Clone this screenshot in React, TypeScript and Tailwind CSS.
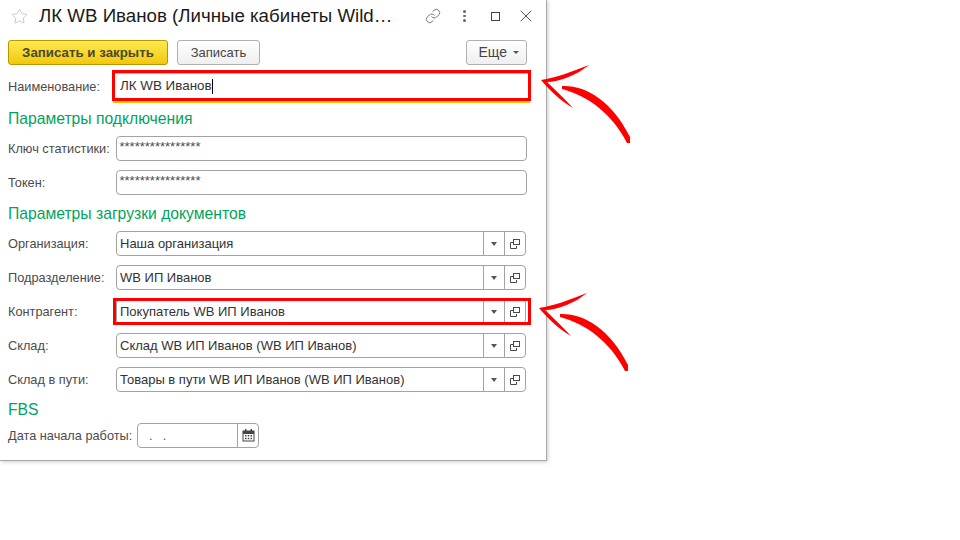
import { ReactNode } from 'react';
import { Link, Star, X } from 'lucide-react';

const Label = ({ children, w = 'w-[108px]' }: { children: ReactNode; w?: string }) => (
  <span className={`${w} shrink-0 text-[12.75px] whitespace-nowrap text-[#4b4b4b]`}>{children}</span>
);

const Heading = ({ children, className }: { children: ReactNode; className: string }) => (
  <h2 className={`pl-2 text-[15.7px] leading-[18px] text-[#00a35c] ${className}`}>{children}</h2>
);

function CopyIcon() {
  return (
    <svg width="10" height="10" viewBox="0 0 10 10" fill="none" stroke="#4a4a4a" strokeWidth="1">
      <rect x="3.5" y="0.5" width="6" height="5" />
      <path d="M3 3.5H0.5V9.5H6.5V7" />
    </svg>
  );
}

function CalendarIcon() {
  return (
    <svg width="13" height="13" viewBox="0 0 13 13" fill="#444">
      <rect x="3" y="0" width="1.5" height="3" />
      <rect x="8.5" y="0" width="1.5" height="3" />
      <path d="M0.5 1.5H12.5V12.5H0.5ZM1.5 5V11.5H11.5V5Z" fillRule="evenodd" />
      <rect x="3" y="6" width="1.5" height="1.5" />
      <rect x="5.75" y="6" width="1.5" height="1.5" />
      <rect x="8.5" y="6" width="1.5" height="1.5" />
      <rect x="3" y="8.75" width="1.5" height="1.5" />
      <rect x="5.75" y="8.75" width="1.5" height="1.5" />
      <rect x="8.5" y="8.75" width="1.5" height="1.5" />
    </svg>
  );
}

function TextRow({ label }: { label: string }) {
  return (
    <div className="flex h-[25px] items-center pl-2">
      <Label>{label}</Label>
      <div className="h-full w-[411px] rounded-[4px] border border-[#a3a3a3] pl-[2.5px] text-[13px] leading-[20px] text-[#4b4b4b]">
        ****************
      </div>
    </div>
  );
}

function SelectRow({ label, value }: { label: string; value: string }) {
  return (
    <div className="flex h-[25px] items-center pl-2">
      <Label>{label}</Label>
      <div className="flex h-full w-[410px] items-center rounded-[4px] border border-[#a3a3a3] text-[13px] text-[#333]">
        <span className="flex-1 pl-[3px]">{value}</span>
        <span className="flex h-full w-[21px] items-center justify-center border-l border-[#a3a3a3]">
          <span className="h-0 w-0 border-x-[3px] border-t-[4px] border-x-transparent border-t-[#555]" />
        </span>
        <span className="flex h-full w-[21px] items-center justify-center border-l border-[#a3a3a3]">
          <CopyIcon />
        </span>
      </div>
    </div>
  );
}

function ArrowMark({ className }: { className: string }) {
  return (
    <svg className={className} width="92" height="80" viewBox="0 0 92 80" fill="#ff0000">
      <path d="M0 15C14 13 30 7 48 0C36 10 18 17 6 17C15 26 24 34 32 43C20 36 9 26 0 15Z" />
      <path d="M21 21C45 20 71 36 89 72L89 78L86 78C72 50 48 31 21 24Z" />
    </svg>
  );
}

export default function App() {
  return (
    <div className="relative h-[540px] w-[960px] overflow-hidden bg-white font-['Liberation_Sans',sans-serif]">
      <div className="h-[461px] w-[547px] border-r border-b border-[#a8a8a8] shadow-[1px_1px_4px_rgba(0,0,0,0.2)]">
        {/* Title bar */}
        <div className="flex h-[31px] items-center pt-[1px]">
          <Star size={17} strokeWidth={1} className="ml-[11px] text-[#b5b5b5]" />
          <h1 className="ml-[11px] w-[355px] text-[18.7px] whitespace-nowrap text-[#1a1a1a]">
            ЛК WB Иванов (Личные кабинеты Wild…
          </h1>
          <Link size={16} strokeWidth={1.3} className="ml-[31px] text-[#666]" />
          <span className="ml-[22px] flex flex-col gap-[2px]">
            <i className="h-[2.5px] w-[2.5px] rounded-full bg-[#666]" />
            <i className="h-[2.5px] w-[2.5px] rounded-full bg-[#666]" />
            <i className="h-[2.5px] w-[2.5px] rounded-full bg-[#666]" />
          </span>
          <span className="ml-[25px] h-[9px] w-[9px] border border-[#444]" />
          <X size={20} strokeWidth={1.2} className="ml-[16px] text-[#555]" />
        </div>

        {/* Command bar */}
        <div className="mt-[9px] flex h-[25px] items-stretch pr-[19px] pl-2">
          <button className="w-[160px] rounded-[3px] border border-[#b39a00] bg-gradient-to-b from-[#ffe94a] to-[#f2c800] text-[13.3px] font-bold text-[#4a4a2a]">
            Записать и закрыть
          </button>
          <button className="ml-[9px] w-[83px] rounded-[3px] border border-[#b0b0b0] bg-gradient-to-b from-white to-[#efefef] text-[13px] text-[#444]">
            Записать
          </button>
          <button className="ml-auto flex w-[61px] items-center justify-end gap-[6px] rounded-[3px] border border-[#b0b0b0] bg-gradient-to-b from-white to-[#efefef] pr-[7px] text-[14px] text-[#444]">
            Еще
            <span className="h-0 w-0 border-x-[3px] border-t-[3px] border-x-transparent border-t-[#555]" />
          </button>
        </div>

        {/* Name */}
        <div className="mt-[9px] flex h-[25px] items-center pl-2">
          <Label>Наименование:</Label>
          <div className="flex h-full w-[411px] items-center pl-[4px] text-[13.4px] text-[#333]">
            ЛК WB Иванов<span className="h-[15px] w-px bg-black" />
          </div>
        </div>

        <Heading className="mt-[11px]">Параметры подключения</Heading>
        <div className="mt-[8px] flex flex-col gap-[9px]">
          <TextRow label="Ключ статистики:" />
          <TextRow label="Токен:" />
        </div>

        <Heading className="mt-[10px]">Параметры загрузки документов</Heading>
        <div className="mt-[8px] flex flex-col gap-[9px]">
          <SelectRow label="Организация:" value="Наша организация" />
          <SelectRow label="Подразделение:" value="WB ИП Иванов" />
          <SelectRow label="Контрагент:" value="Покупатель WB ИП Иванов" />
          <SelectRow label="Склад:" value="Склад WB ИП Иванов (WB ИП Иванов)" />
          <SelectRow label="Склад в пути:" value="Товары в пути WB ИП Иванов (WB ИП Иванов)" />
        </div>

        <Heading className="mt-[9px]">FBS</Heading>
        <div className="mt-[4px] flex h-[25px] items-center pl-2">
          <Label w="w-[129px]">Дата начала работы:</Label>
          <div className="flex h-full w-[122px] items-center rounded-[4px] border border-[#a3a3a3] text-[13px] text-[#555]">
            <span className="flex-1 pl-[11px] tracking-[1px] whitespace-pre">.  .</span>
            <span className="flex h-full w-[21px] items-center justify-center border-l border-[#a3a3a3]">
              <CalendarIcon />
            </span>
          </div>
        </div>
      </div>

      {/* Annotations */}
      <div className="absolute top-[73px] left-[113px] h-[30px] w-[417px] border-t border-b-2 border-[#f5c800]" />
      <div className="absolute top-[70px] left-[112px] h-[31px] w-[419px] border-[3px] border-[#ff0000]" />
      <div className="absolute top-[298px] left-[113px] h-[27px] w-[418px] border-[3px] border-[#ff0000]" />
      <ArrowMark className="absolute top-[65px] left-[541px]" />
      <ArrowMark className="absolute top-[293px] left-[539px]" />
    </div>
  );
}
